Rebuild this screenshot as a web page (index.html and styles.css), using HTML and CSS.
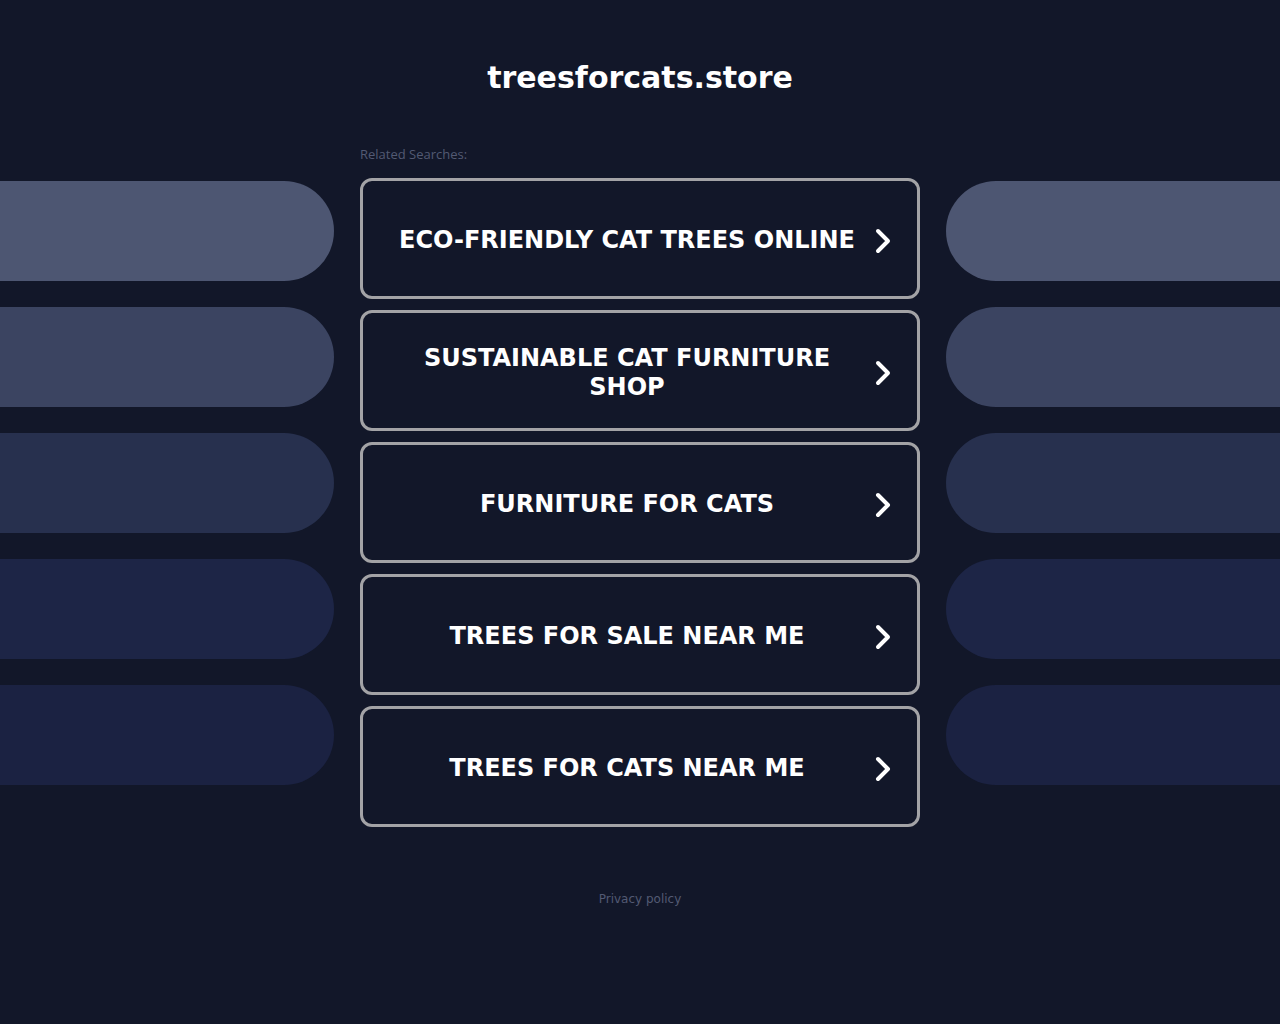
FILE: index.html
```html
<!DOCTYPE html>
<html lang="en">
<head>
  <meta charset="UTF-8" />
  <meta name="viewport" content="width=device-width, initial-scale=1.0" />
  <title>treesforcats.store</title>
  <link rel="stylesheet" href="styles.css">
</head>
<body>
  <h1 class="site-title">treesforcats.store</h1>

  <div class="layout">
    <!-- decorative bars, left side -->
    <div class="pills pills-left">
      <div class="pill tone-1"></div>
      <div class="pill tone-2"></div>
      <div class="pill tone-3"></div>
      <div class="pill tone-4"></div>
      <div class="pill tone-5"></div>
    </div>

    <main class="center">
      <div class="label">Related Searches:</div>
      <div class="results">
        <a class="result" href="#"><span class="result-text">ECO-FRIENDLY CAT TREES ONLINE</span><svg class="chevron" viewBox="0 0 18 26"><polyline points="4,3 14,13 4,23" /></svg></a>
        <a class="result" href="#"><span class="result-text">SUSTAINABLE CAT FURNITURE SHOP</span><svg class="chevron" viewBox="0 0 18 26"><polyline points="4,3 14,13 4,23" /></svg></a>
        <a class="result" href="#"><span class="result-text">FURNITURE FOR CATS</span><svg class="chevron" viewBox="0 0 18 26"><polyline points="4,3 14,13 4,23" /></svg></a>
        <a class="result" href="#"><span class="result-text">TREES FOR SALE NEAR ME</span><svg class="chevron" viewBox="0 0 18 26"><polyline points="4,3 14,13 4,23" /></svg></a>
        <a class="result" href="#"><span class="result-text">TREES FOR CATS NEAR ME</span><svg class="chevron" viewBox="0 0 18 26"><polyline points="4,3 14,13 4,23" /></svg></a>
      </div>
    </main>

    <!-- decorative bars, right side -->
    <div class="pills pills-right">
      <div class="pill tone-1"></div>
      <div class="pill tone-2"></div>
      <div class="pill tone-3"></div>
      <div class="pill tone-4"></div>
      <div class="pill tone-5"></div>
    </div>
  </div>

  <footer class="footer">
    <a href="#">Privacy policy</a>
  </footer>
</body>
</html>
```

FILE: styles.css
```css
:root {
  --bg: #121729;
  --fg: #fff;
  --border: #a3a3a6;
  --muted: #535a73;
}
body {
  margin: 0;
  font-family: 'DejaVu Sans', sans-serif;
  background: var(--bg);
  color: var(--fg);
}
.site-title {
  margin: 0;
  padding-top: 60px;
  text-align: center;
  font-size: 30px;
  line-height: 36px;
  font-weight: bold;
}
.layout {
  display: grid;
  grid-template-columns: 1fr 560px 1fr;
  column-gap: 26px;
  margin-top: 50px;
}
.pills {
  display: flex;
  flex-direction: column;
  gap: 26px;
  padding-top: 35px;
}
.pill {
  height: 100px;
}
.pills-left .pill {
  border-radius: 0 50px 50px 0;
}
.pills-right .pill {
  border-radius: 50px 0 0 50px;
}
.tone-1 { background: #4d5672; }
.tone-2 { background: #3b4461; }
.tone-3 { background: #27304e; }
.tone-4 { background: #1d2546; }
.tone-5 { background: #1b2242; }

.label {
  font-family: 'Open Sans', sans-serif;
  font-size: 13px;
  line-height: 16px;
  color: var(--muted);
  margin-bottom: 16px;
}
.results {
  display: flex;
  flex-direction: column;
  gap: 11px;
}
.result {
  display: flex;
  align-items: center;
  box-sizing: border-box;
  height: 121px;
  padding: 4px 25px 0 24px;
  border: 3px solid var(--border);
  border-radius: 12px;
  color: var(--fg);
  text-decoration: none;
}
.result-text {
  flex: 1;
  text-align: center;
  font-size: 24px;
  line-height: 29px;
  font-weight: bold;
}
.chevron {
  width: 18px;
  height: 26px;
  margin-left: 7px;
  flex-shrink: 0;
}
.chevron polyline {
  fill: none;
  stroke: var(--fg);
  stroke-width: 4;
  stroke-linecap: round;
  stroke-linejoin: round;
}
.footer {
  margin-top: 64px;
  text-align: center;
  font-size: 12px;
  line-height: 16px;
}
.footer a {
  color: var(--muted);
  text-decoration: none;
}
```
